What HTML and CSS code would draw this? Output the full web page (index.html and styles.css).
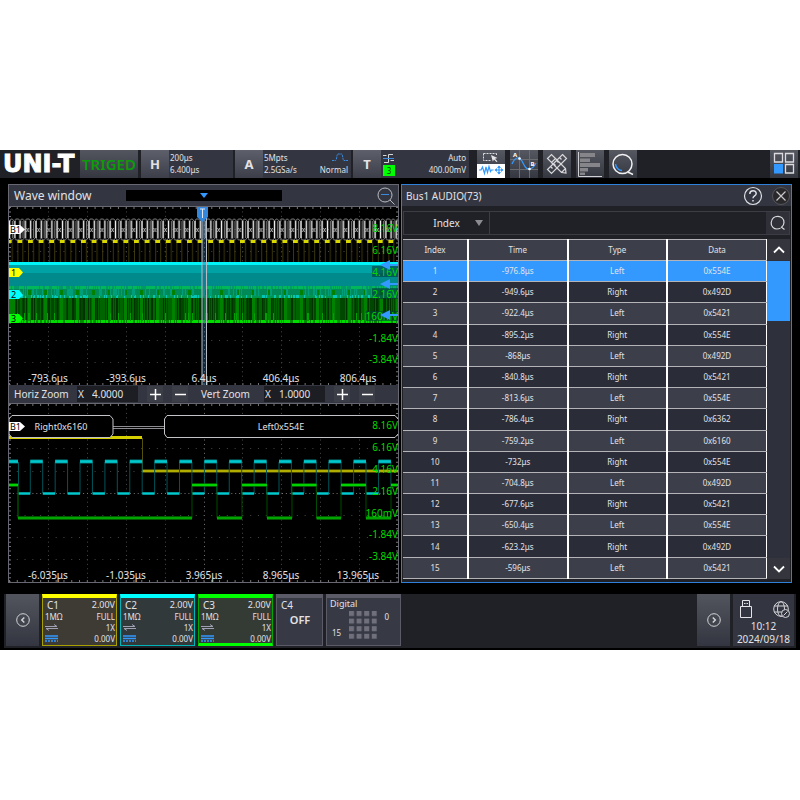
FILE: index.html
```html
<!DOCTYPE html>
<html lang="en">
<head>
    <meta charset="UTF-8">
    <meta name="viewport" content="width=device-width, initial-scale=1.0">
    <title>UNI-T Oscilloscope</title>
    <link rel="stylesheet" href="styles.css">
</head>
<body>
    <div class="screen">
        <header class="topbar">
            <div class="logo">UNI-T</div>
            <div class="trig-status">TRIGED</div>
            <div class="info info-h">
                <button class="info-key">H</button>
                <div class="info-body">
                    <div class="line"><span>200μs</span></div>
                    <div class="line"><span>6.400μs</span></div>
                </div>
            </div>
            <div class="info info-a">
                <button class="info-key">A</button>
                <div class="info-body">
                    <div class="line"><span>5Mpts</span>
                        <svg width="16" height="9" viewBox="0 0 16 9" fill="none" stroke="#3a8be0"><path d="M0 7.500H3.500C5 7.500 4.500 1 6 1H9.500C11 1 10.500 7.500 12 7.500H16" stroke-dasharray="2 .6"/></svg>
                    </div>
                    <div class="line"><span>2.5GSa/s</span><span>Normal</span></div>
                </div>
            </div>
            <div class="info info-t">
                <button class="info-key">T</button>
                <div class="info-body">
                    <div class="line">
                        <svg width="12" height="10" viewBox="0 0 12 10" fill="none" stroke="#d5d6da"><path d="M1 9.500H5.500V1.500H10M0 2.500H3.500M7.500 7.500H11"/><path d="M0 5.500H11" stroke="#3a8be0"/></svg>
                        <span>Auto</span>
                    </div>
                    <div class="line"><span class="source">3</span><span>400.00mV</span></div>
                </div>
            </div>
            <div class="tools">
                <button class="tool" aria-label="Zoom and pan">
                    <svg viewBox="0 0 28 28" fill="none"><path d="M0 14H28V28H0z" fill="#fff"/><path d="M6.500 3.500H19.500M6.500 3.500V10.500H14M19.500 3.500V5" stroke="#dcdde0" stroke-dasharray="2 1"/><path d="M14 5L20.500 8L18 8.800L20.500 11.500L19.500 12L17 9.500L15.800 11.500z" fill="#e6e6e8"/><path d="M2 20H4L5.500 17L7.500 23.500L9 17L10.500 22.500L12 16.500L13.500 21.500L14.500 20H16.500M18 20H26M22 16V24" stroke="#3399ff" stroke-width="1.200"/><path d="M22 15.500L24 18H20zM22 24.500L24 22H20zM17.500 20L20 18V22zM26.500 20L24 18V22z" fill="#3399ff"/></svg>
                </button>
                <button class="tool" aria-label="Cursor">
                    <svg viewBox="0 0 28 28" fill="none"><path d="M9.500 0V28M19.500 0V28M0 9.500H28M0 19.500H28" stroke="#6b6c70"/><path d="M2 14C5 7 9 6 12 11C15 17 16 19 19 19C22 19 24 17 26 13" stroke="#3399ff" stroke-width="1.300"/><circle cx="9.500" cy="8.500" r="1.300" fill="#fff"/><circle cx="19.500" cy="19" r="1.300" fill="#fff"/><text x="3" y="6.500" class="tool-letter">A</text><text x="20.500" y="15.500" class="tool-letter">B</text></svg>
                </button>
                <button class="tool" aria-label="Measure">
                    <svg viewBox="0 0 28 28" fill="none" stroke="#d8d8dc" stroke-width="1.200"><path d="M4.500 8.500L8.500 4.500L12.500 8.500L8.500 12.500zM8.500 12.500L18.500 22.500L23 23L22.500 18.500L12.500 8.500M18.500 22.500L22.500 18.500"/><path d="M19.500 4.500L23.500 8.500L8.500 23.500L4.500 19.500zM16.500 7.500L18.500 9.500M13.500 10.500L15.500 12.500M10.500 13.500L12.500 15.500M7.500 16.500L9.500 18.500"/></svg>
                </button>
                <button class="tool" aria-label="Histogram">
                    <svg viewBox="0 0 28 28" fill="#85858a"><path d="M4 3H19V7H4zM4 8.500H14V12H4zM4 13H24V17H4zM4 18H12V21.500H4zM4 22.500H9V25H4z"/><path d="M2.500 2V26.500H26" fill="none" stroke="#d0d0d4"/></svg>
                </button>
                <button class="tool" aria-label="Search">
                    <svg viewBox="0 0 28 28" fill="none" stroke="#f0f0f2" stroke-width="1.500"><circle cx="13.500" cy="14" r="9.500"/><path d="M18.500 22.500H20L24 24.500"/><path d="M6.500 14C7 18 10 20.500 13 20.500" stroke="#3399ff"/></svg>
                </button>
            </div>
            <button class="tool tool-menu" aria-label="Layout">
                <svg viewBox="0 0 28 28" fill="none" stroke="#dcdce0" stroke-width="1.300"><path d="M4.500 3.500H12.500V12H4.500zM15.500 3.500H23.500V12H15.500zM15.500 14.500H23.500V23H15.500z"/><path d="M4 14H13V23.500H4z" fill="#3399ff" stroke="none"/></svg>
            </button>
        </header>

        <main class="windows">
            <section class="wave-window">
                <div class="title-bar">
                    <h1>Wave window</h1>
                    <div class="position-track"><span class="position-mark"></span></div>
                    <button class="icon-button" aria-label="Zoom out">
                        <svg width="20" height="20" viewBox="0 0 20 20" fill="none" stroke="#b9bac0"><circle cx="9" cy="9" r="7"/><path d="M14 14L18.500 18.500"/><path d="M5 8.500H13" stroke="#3a8be0"/></svg>
                    </button>
                </div>
                <svg class="plot" id="mainPlot" viewBox="9 207 389 178">
                    <defs>
                        <pattern id="busCells" x="35" y="218" width="10.600" height="23" patternUnits="userSpaceOnUse">
                            <path d="M1 3V20M6.300 3V20" stroke="#f4f4f4" stroke-width="1.400" fill="none"/>
                            <path d="M9.300 3V20" stroke="#888" fill="none"/>
                            <path d="M1 3L2 1H4.800L6.300 3L7.800 1H9L10.600 3M1 20L2 22H4.800L6.300 20L7.800 22H9L10.600 20" stroke="#aaa" stroke-width=".7" fill="none"/>
                            <path d="M2.300 10L4.600 14M4.600 10L2.300 14" stroke="#ccc" stroke-width=".8"/>
                        </pattern>
                        <pattern id="clockPulses" x="28" y="240" width="10.600" height="23" patternUnits="userSpaceOnUse">
                            <path d="M0 0H5V3H0z" fill="#d8d800"/>
                            <path d="M.5 3V23M5.500 3V23" stroke="#4a4510" stroke-width=".8"/>
                        </pattern>
                    </defs>
                    <g class="grid"></g>
                    <path d="M9 218H398V241H9z" fill="url(#busCells)"/>
                    <path d="M9 240H398V263H9z" fill="url(#clockPulses)"/>
                    <path d="M9 262H398V298H9z" fill="#008a8c"/>
                    <path d="M9 265H398V273H9z" fill="#00a3a5"/>
                    <path d="M9 262H398V265H9z" fill="#00f4f8"/>
                    <path d="M9 286H398V298H9z" fill="#008a58"/>
                    <path d="M9 298H398V323H9z" fill="#003200"/>
                    <g id="dataNoise"></g>
                    <g class="cursor-zone">
                        <path d="M202 206H206V385H202z" fill="#2f6ea5" fill-opacity=".35"/>
                        <path d="M202 206V385M206.500 206V385" stroke="#b8bcc4"/>
                        <path d="M197 206H208V217L202.500 222L197 217z" fill="#3388dd"/>
                        <path d="M200 209H205M202.500 209V218" stroke="#e4e8ee"/>
                    </g>
                    <g class="scale-labels">
                        <path d="M372 266H398V277H372zM372 288H398V299H372zM366 311H398V321H366z" fill="#003c3a" fill-opacity=".6"/>
                        <text x="398" y="232">8.16V</text><text x="398" y="254">6.16V</text><text x="398" y="276">4.16V</text><text x="398" y="298">2.16V</text><text x="398" y="320">160mV</text><text x="398" y="342">-1.84V</text><text x="398" y="363">-3.84V</text>
                    </g>
                    <path d="M380 265L390 260V264H398V266H390V270zM380 284L390 279V283H398V285H390V289zM380 315L390 310V314H398V316H390V320z" fill="#3399ff"/>
                    <g class="time-labels">
                        <text x="48" y="382">-793.6μs</text><text x="126" y="382">-393.6μs</text><text x="204" y="382">6.4μs</text><text x="281" y="382">406.4μs</text><text x="358" y="382">806.4μs</text>
                    </g>
                    <g class="tags">
                        <path d="M9 225H20L25 229.500L20 234H9z" fill="#fff"/><text x="10" y="233">B1</text>
                        <path d="M8 268H19L23 272.500L19 277H8z" fill="#ffff00"/><text x="11" y="276">1</text>
                        <path d="M8 290H19L23 295L19 299H8z" fill="#00ffff"/><text x="11" y="298">2</text>
                        <path d="M8 314H19L23 318.500L19 323H8z" fill="#00ff00"/><text x="11" y="322">3</text>
                    </g>
                </svg>
                <div class="zoom-bar">
                    <label for="horizZoom">Horiz Zoom</label>
                    <div class="zoom-field"><span>X</span><input type="text" id="horizZoom" value="4.0000"></div>
                    <button class="step" aria-label="Horizontal zoom in"><svg width="11" height="11" viewBox="0 0 11 11"><path d="M0 5.500H11M5.500 0V11"/></svg></button>
                    <button class="step" aria-label="Horizontal zoom out"><svg width="11" height="11" viewBox="0 0 11 11"><path d="M0 5.500H11"/></svg></button>
                    <label for="vertZoom" class="vert-label">Vert Zoom</label>
                    <div class="zoom-field"><span>X</span><input type="text" id="vertZoom" value="1.0000"></div>
                    <button class="step" aria-label="Vertical zoom in"><svg width="11" height="11" viewBox="0 0 11 11"><path d="M0 5.500H11M5.500 0V11"/></svg></button>
                    <button class="step" aria-label="Vertical zoom out"><svg width="11" height="11" viewBox="0 0 11 11"><path d="M0 5.500H11"/></svg></button>
                </div>
                <svg class="plot" id="zoomPlot" viewBox="9 404 389 178">
                    <g class="grid"></g>
                    <g fill="none">
                        <path d="M9 437.500H142" stroke="#d6d000" stroke-width="3"/>
                        <path d="M142.500 438V471" stroke="#55500a"/>
                        <path d="M142 471H398" stroke="#8a8800" stroke-width="3"/>
                        <path d="M142 471H398" stroke="#d6d000"/>
                        <g id="zoomTraces"></g>
                    </g>
                    <g fill="#000" stroke="#c4c4c8">
                        <path d="M113 426.500H164M113 428.500H164" stroke="#8c8c90"/>
                        <path d="M12 415.500H110L113 419V434L110 437.500H12L9 434V419z"/>
                        <path d="M398 419L395 415.500H167L164.500 419V434L167 437.500H395L398 434"/>
                    </g>
                    <g class="bus-labels"><text x="61" y="430">Right0x6160</text><text x="281" y="430">Left0x554E</text></g>
                    <g class="scale-labels">
                        <text x="398" y="429">8.16V</text><text x="398" y="451">6.16V</text><text x="398" y="473">4.16V</text><text x="398" y="495">2.16V</text><text x="398" y="517">160mV</text><text x="398" y="538">-1.84V</text><text x="398" y="560">-3.84V</text>
                    </g>
                    <g class="time-labels">
                        <text x="48" y="579">-6.035μs</text><text x="126" y="579">-1.035μs</text><text x="204" y="579">3.965μs</text><text x="281" y="579">8.965μs</text><text x="358" y="579">13.965μs</text>
                    </g>
                    <g class="tags"><path d="M9 422H20L25 426.500L20 431H9z" fill="#fff"/><text x="10" y="430">B1</text></g>
                </svg>
            </section>

            <section class="bus-window">
                <div class="title-bar bus-title">
                    <h2>Bus1 AUDIO(73)</h2>
                    <button class="icon-button" aria-label="Help">
                        <svg width="20" height="20" viewBox="0 0 20 20" fill="none" stroke="#dedfe3" stroke-width="1.200"><circle cx="10" cy="10" r="8.500"/><path d="M6.800 8C6.800 3.700 13.200 3.700 13.200 7.500C13.200 10 10 9.800 10 12.200M10 14V15.500" stroke-width="1.500"/></svg>
                    </button>
                    <button class="icon-button" aria-label="Close">
                        <svg width="20" height="20" viewBox="0 0 20 20" fill="none"><circle cx="10" cy="10" r="8.500" fill="#29282a" stroke="#55555a"/><path d="M5.500 5.500L14.500 14.500M14.500 5.500L5.500 14.500" stroke="#c8c8cc" stroke-width="1.200"/></svg>
                    </button>
                </div>
                <form class="search-row">
                    <div class="select-wrap">
                        <select aria-label="Search column"><option>Index</option><option>Time</option><option>Type</option><option>Data</option></select>
                    </div>
                    <input type="text" class="search-input" aria-label="Search text">
                    <button type="button" class="search-button" aria-label="Search">
                        <svg width="16" height="16" viewBox="0 0 16 16" fill="none" stroke="#d8d8dc" stroke-width="1.200"><path d="M10.500 13.300C3 16 .8 10 1.200 7.500C2 -1 14 -.5 14 7.500C14 9.500 13 11 11.500 12.300L14.500 14.500"/></svg>
                    </button>
                </form>
                <div class="table-area">
                    <table>
                        <thead><tr><th class="index-col">Index</th><th>Time</th><th>Type</th><th>Data</th></tr></thead>
                        <tbody>
                            <tr class="selected"><td>1</td><td>-976.8μs</td><td>Left</td><td>0x554E</td></tr>
                            <tr><td>2</td><td>-949.6μs</td><td>Right</td><td>0x492D</td></tr>
                            <tr><td>3</td><td>-922.4μs</td><td>Left</td><td>0x5421</td></tr>
                            <tr><td>4</td><td>-895.2μs</td><td>Right</td><td>0x554E</td></tr>
                            <tr><td>5</td><td>-868μs</td><td>Left</td><td>0x492D</td></tr>
                            <tr><td>6</td><td>-840.8μs</td><td>Right</td><td>0x5421</td></tr>
                            <tr><td>7</td><td>-813.6μs</td><td>Left</td><td>0x554E</td></tr>
                            <tr><td>8</td><td>-786.4μs</td><td>Right</td><td>0x6362</td></tr>
                            <tr><td>9</td><td>-759.2μs</td><td>Left</td><td>0x6160</td></tr>
                            <tr><td>10</td><td>-732μs</td><td>Right</td><td>0x554E</td></tr>
                            <tr><td>11</td><td>-704.8μs</td><td>Left</td><td>0x492D</td></tr>
                            <tr><td>12</td><td>-677.6μs</td><td>Right</td><td>0x5421</td></tr>
                            <tr><td>13</td><td>-650.4μs</td><td>Left</td><td>0x554E</td></tr>
                            <tr><td>14</td><td>-623.2μs</td><td>Right</td><td>0x492D</td></tr>
                            <tr><td>15</td><td>-596μs</td><td>Left</td><td>0x5421</td></tr>
                        </tbody>
                    </table>
                    <div class="scrollbar">
                        <button aria-label="Scroll up"><svg width="12" height="8" viewBox="0 0 12 8"><path d="M1 6.500L6 1.500L11 6.500"/></svg></button>
                        <div class="scroll-track"><div class="scroll-thumb"></div></div>
                        <button aria-label="Scroll down"><svg width="12" height="8" viewBox="0 0 12 8"><path d="M1 1.500L6 6.500L11 1.500"/></svg></button>
                    </div>
                </div>
            </section>
        </main>

        <footer class="bottombar">
            <button class="page-button" aria-label="Previous"><svg width="14" height="14" viewBox="0 0 14 14"><circle cx="7" cy="7" r="6.300"/><path d="M8.300 4.500L5.800 7L8.300 9.500" stroke-width="1.500"/></svg></button>
            <div class="channel c1">
                <div class="line"><b>C1</b><span>2.00V</span></div>
                <div class="line small"><span>1MΩ</span><span>FULL</span></div>
                <div class="line small"><svg width="13" height="7" viewBox="0 0 13 7" class="swap"><path d="M0 2.500H12L9 .5M13 4.500H1L4 6.500"/></svg><span>1X</span></div>
                <div class="line small"><svg width="13" height="7" viewBox="0 0 13 7" class="dc"><path d="M0 1H13M0 3.500H13"/><path d="M0 6H13" stroke-dasharray="2 1"/></svg><span>0.00V</span></div>
            </div>
            <div class="channel c2">
                <div class="line"><b>C2</b><span>2.00V</span></div>
                <div class="line small"><span>1MΩ</span><span>FULL</span></div>
                <div class="line small"><svg width="13" height="7" viewBox="0 0 13 7" class="swap"><path d="M0 2.500H12L9 .5M13 4.500H1L4 6.500"/></svg><span>1X</span></div>
                <div class="line small"><svg width="13" height="7" viewBox="0 0 13 7" class="dc"><path d="M0 1H13M0 3.500H13"/><path d="M0 6H13" stroke-dasharray="2 1"/></svg><span>0.00V</span></div>
            </div>
            <div class="channel c3">
                <div class="line"><b>C3</b><span>2.00V</span></div>
                <div class="line small"><span>1MΩ</span><span>FULL</span></div>
                <div class="line small"><svg width="13" height="7" viewBox="0 0 13 7" class="swap"><path d="M0 2.500H12L9 .5M13 4.500H1L4 6.500"/></svg><span>1X</span></div>
                <div class="line small"><svg width="13" height="7" viewBox="0 0 13 7" class="dc"><path d="M0 1H13M0 3.500H13"/><path d="M0 6H13" stroke-dasharray="2 1"/></svg><span>0.00V</span></div>
            </div>
            <div class="channel c4">
                <div class="line"><b>C4</b></div>
                <div class="off">OFF</div>
            </div>
            <div class="channel digital">
                <div class="digital-name">Digital</div>
                <div class="digital-body">
                    <span class="last">15</span>
                    <svg width="28" height="28" viewBox="0 0 28 28"><defs><pattern id="bits" width="7.600" height="7.600" patternUnits="userSpaceOnUse"><path d="M0 0H5V5H0z" fill="#70707c"/></pattern></defs><path d="M0 0H28V28H0z" fill="url(#bits)"/></svg>
                    <span>0</span>
                </div>
            </div>
            <button class="page-button next" aria-label="Next"><svg width="14" height="14" viewBox="0 0 14 14"><circle cx="7" cy="7" r="6.300"/><path d="M5.800 4.500L8.300 7L5.800 9.500" stroke-width="1.500"/></svg></button>
            <div class="status">
                <div class="status-icons">
                    <svg width="12" height="18" viewBox="0 0 12 18" fill="none" stroke="#e4e4e8"><path d="M2.500 6V.5H9.500V6M.5 6.500H11.500V17.500H.5zM4 3.500H5.500M6.500 3.500H8"/></svg>
                    <svg width="17" height="17" viewBox="0 0 17 17" fill="none" stroke="#d4d4d8"><circle cx="8" cy="8" r="7.300"/><ellipse cx="8" cy="8" rx="3.500" ry="7.300"/><path d="M1 5H15M1 11H15"/><circle cx="12.500" cy="12.500" r="4" fill="#333640"/><path d="M10.500 14.500L14.500 10.500"/></svg>
                </div>
                <div>10:12</div>
                <div>2024/09/18</div>
            </div>
        </footer>
    </div>
    <script src="script.js"></script>
</body>
</html>
```
FILE: styles.css
```css
* {
  box-sizing: border-box;
}

body {
  margin: 0;
  min-height: 100vh;
  display: flex;
  align-items: center;
  background-color: #fff;
  font-family: "Noto Sans", sans-serif;
  color: #e2e2e6;
}

button, input, select {
  font: inherit;
  color: inherit;
  padding: 0;
  border: none;
  border-radius: 0;
}

button {
  display: flex;
  align-items: center;
  justify-content: center;
  background: none;
  cursor: pointer;
}

h1, h2 {
  margin: 0;
  font-weight: normal;
}

.screen {
  width: 100%;
  display: flex;
  flex-direction: column;
  background-color: #000;
  padding-bottom: 2px;
}

/* top bar */
.topbar {
  display: flex;
  height: 28px;
  padding-right: 2px;
  background-color: #202127;
}

.logo {
  width: 80px;
  padding-left: 3px;
  font: bold 24px/28px "DejaVu Sans", sans-serif;
  color: #fff;
  -webkit-text-stroke: 1px #fff;
}

.trig-status {
  width: 58px;
  margin-right: 3px;
  font-size: 15px;
  font-weight: 600;
  line-height: 28px;
  text-align: center;
  color: #0a9c0a;
  background: linear-gradient(#54565f, #353740);
}

.info {
  display: flex;
  margin-right: 2px;
  background-color: #333640;
}

.info-h {
  width: 92px;
}

.info-a, .info-t {
  width: 116px;
}

.info-key {
  width: 28px;
  font-size: 13px;
  font-weight: bold;
  background: linear-gradient(#5d5f6a, #3c3e49);
}

.info-body {
  flex: 1;
  display: flex;
  flex-direction: column;
  justify-content: space-evenly;
  padding: 1px 3px 1px 1px;
  font-size: 8px;
}

.line {
  display: flex;
  justify-content: space-between;
  align-items: center;
  line-height: 12px;
}

.source {
  width: 12px;
  line-height: 11px;
  text-align: center;
  color: #004400;
  background-color: #00ff00;
}

.info-t .info-body {
  padding-left: 2px;
}

.tools {
  display: flex;
  gap: 5px;
  margin-left: 6px;
}

.tool {
  width: 28px;
  background: linear-gradient(#565861, #353740);
}

.tool svg {
  width: 28px;
  height: 28px;
}

.tool-letter {
  font-size: 6px;
  font-weight: bold;
  fill: #fff;
}

.tool-menu {
  margin-left: auto;
}

/* windows */
.windows {
  display: grid;
  grid-template-columns: 1fr 1fr;
  gap: 2px;
  padding: 6px 8px 11px;
}

.wave-window, .bus-window {
  display: flex;
  flex-direction: column;
  min-width: 0;
  border: 1px solid #676872;
}

.bus-window {
  border-color: #2f80d8;
  background-color: #202127;
}

.title-bar {
  display: flex;
  align-items: center;
  height: 21px;
  padding: 0 2px 0 5px;
  background-color: #333640;
}

.title-bar h1 {
  width: 112px;
  font-size: 12px;
}

.title-bar h2 {
  flex: 1;
  font-size: 10px;
}

.position-track {
  flex: 0 1 156px;
  display: flex;
  justify-content: center;
  height: 11px;
  margin-right: auto;
  padding-top: 3px;
  background-color: #000;
}

.position-mark {
  width: 0;
  height: 0;
  border: 4px solid transparent;
  border-top: 5px solid #3399ff;
  border-bottom: none;
}

.bus-title {
  gap: 8px;
  padding: 0;
  padding-left: 4px;
}

.plot {
  display: block;
  width: 100%;
  border-top: 1px solid #676872;
  background-color: #000;
  font-size: 10px;
}

.scale-labels text {
  fill: #00d800;
  text-anchor: end;
}

.time-labels text, .bus-labels text {
  fill: #e2e2e6;
  text-anchor: middle;
}

.bus-labels {
  font-size: 9px;
}

.tags text {
  font-size: 9px;
  fill: #000;
}

.zoom-bar {
  display: flex;
  align-items: center;
  gap: 9px;
  height: 18px;
  padding-left: 5px;
  font-size: 10px;
  background-color: #333640;
}

.zoom-bar label {
  width: 54px;
  white-space: nowrap;
}

.zoom-bar .vert-label {
  margin-left: 4px;
}

.zoom-field {
  display: flex;
  align-items: center;
  width: 61px;
  height: 16px;
  padding-left: 1px;
  font-size: 10px;
  background-color: #1d1e23;
}

.zoom-field span {
  width: 14px;
}

.zoom-field input {
  flex: 1;
  min-width: 0;
  background: none;
}

.step {
  width: 16px;
  height: 16px;
  background-color: #3b3d47;
}

.step path {
  stroke: #fff;
  stroke-width: 1.5px;
}

/* bus list */
.search-row {
  display: flex;
  height: 24px;
  margin: 5px 1px 4px 1px;
  border: 1px solid #3c3d44;
  font-size: 10px;
}

.select-wrap {
  display: flex;
  align-items: center;
  width: 86px;
  padding-right: 6px;
  border-right: 1px solid #3c3d44;
}

.select-wrap::after {
  content: "";
  border: 4px solid transparent;
  border-top: 6px solid #8c8c90;
  border-bottom: none;
}

select {
  flex: 1;
  padding-left: 14px;
  appearance: none;
  text-align: center;
  background: none;
}

.search-input {
  flex: 1;
  min-width: 0;
  background: none;
}

.search-button {
  width: 23px;
  background-color: #2f3038;
}

.table-area {
  display: flex;
  flex: 1;
  padding: 0 1px 3px 1px;
}

table {
  flex: 1;
  width: 100%;
  border-collapse: collapse;
  table-layout: fixed;
  font-size: 8px;
  line-height: 12px;
  text-align: center;
}

tr {
  height: 21px;
}

th, td {
  padding: 0;
  font-weight: normal;
  border: 1px solid #b4b4b8;
  border-width: 1px 2px;
  border-left-color: #fff;
  border-right-color: #fff;
}

.index-col {
  width: 65px;
}

th:first-child, td:first-child {
  border-left: none;
}

th:last-child, td:last-child {
  border-right-width: 1px;
}

th, tr:nth-child(odd) td {
  background-color: #3c3f49;
}

tr:nth-child(even) td {
  background-color: #2a2c37;
}

.selected td, tr.selected:nth-child(odd) td {
  background-color: #3399ff;
}

.scrollbar {
  display: flex;
  flex-direction: column;
  width: 23px;
}

.scrollbar button {
  height: 21px;
  background-color: #35363d;
}

.scrollbar path {
  fill: none;
  stroke: #fff;
  stroke-width: 1.8px;
}

.scroll-track {
  flex: 1;
  background-color: #2e313b;
}

.scroll-thumb {
  height: 20%;
  margin-top: 1px;
  background-color: #3399ff;
}

/* bottom bar */
.bottombar {
  display: flex;
  gap: 3px;
  height: 54px;
  margin: 0 4px;
  padding: 0 2px 2px;
  background-color: #202127;
}

.page-button {
  width: 33px;
  background: linear-gradient(#53555e, #333640);
}

.page-button svg, .swap, .dc {
  fill: none;
  stroke: #d4d4d8;
}

.page-button.next {
  margin-left: auto;
}

.channel {
  display: flex;
  flex-direction: column;
  width: 75px;
  padding: 1px 1px 0 2px;
  border: 1px solid #5a5b66;
  border-top-width: 4px;
  font-size: 9px;
  background-color: #373a44;
}

.channel b {
  padding-left: 2px;
  font-size: 10px;
  font-weight: normal;
}

.channel .small {
  font-size: 8px;
  line-height: 11px;
}

.channel .swap {
  stroke: #a0a0b4;
}

.channel .dc {
  stroke: #3399ff;
  stroke-width: 1.5px;
}

.c1 {
  border-color: #a8a000;
  border-top-color: #ffff00;
  background-color: #3d3b34;
}

.c2 {
  border-color: #00b4b8;
  border-top-color: #00ffff;
  background-color: #32393b;
}

.c3 {
  border-color: #00a800;
  border-top-color: #00ff00;
  border-bottom: 3px solid #00ff00;
  background-color: #343b35;
}

.c4 {
  width: 47px;
}

.off {
  font-size: 11px;
  font-weight: 600;
  line-height: 18px;
  text-align: center;
}

.digital-name {
  padding-left: 1px;
  line-height: 9px;
}

.digital-body {
  display: flex;
  justify-content: space-between;
  padding: 3px 10px 0 3px;
  font-size: 8px;
  line-height: 12px;
}

.last {
  align-self: flex-end;
}

.status {
  width: 61px;
  font-size: 10px;
  line-height: 13px;
  text-align: center;
  background-color: #333640;
}

.status-icons {
  display: flex;
  justify-content: space-between;
  align-items: flex-end;
  height: 26px;
  padding: 4px 4px 2px 7px;
}
```
FILE: script.js
```js
const SVG_NS = 'http://www.w3.org/2000/svg';

function addPath(parent, d, stroke, width, dash) {
    const path = document.createElementNS(SVG_NS, 'path');
    path.setAttribute('d', d);
    path.setAttribute('stroke', stroke);
    path.setAttribute('stroke-width', width);
    path.setAttribute('fill', 'none');
    if (dash) path.setAttribute('stroke-dasharray', dash);
    parent.appendChild(path);
}

// 10 x 8 divisions
function drawGrid(id, top) {
    const grid = document.querySelector('#' + id + ' .grid');
    const dx = 38.9, dy = 22.2;
    for (let i = 1; i < 10; i++) {
        const x = Math.round(9 + i * dx) + 0.5;
        addPath(grid, `M${x} ${top}V${top + 178}`, i === 5 ? '#777' : '#484848', 1, '1 3.44');
    }
    for (let j = 1; j < 8; j++) {
        const y = Math.round(top + j * dy) + 0.5;
        addPath(grid, `M9 ${y}H398`, j === 4 ? '#777' : '#484848', 1, j === 4 ? '1 2.9' : '1 6.78');
    }
    addPath(grid, `M9 ${top + 1}H398M9 ${top + 177}H398`, '#777', 2, '1 6.78');
    addPath(grid, `M10 ${top}V${top + 178}M397 ${top}V${top + 178}`, '#777', 2, '1 3.44');
}

let seed = 7;
function random() {
    seed = (seed * 16807) % 2147483647;
    return seed / 2147483647;
}

function drawNoise() {
    const noise = document.getElementById('dataNoise');
    for (let x = 9; x < 398; x++) {
        const r = random();
        const px = x + 0.5;
        if (r > 0.3) addPath(noise, `M${px} 298V323`, r > 0.65 ? '#006400' : '#004800', 1);
        if ((x - 12) % 16 < 3) addPath(noise, `M${px} 290V323`, '#008200', 1);
        addPath(noise, `M${px} 286V289`, random() > 0.35 ? '#00b85a' : '#009a68', 1);
        addPath(noise, `M${px} 295V298`, random() > 0.7 ? '#00c8b4' : '#009650', 1);
        addPath(noise, `M${px} 320V323`, random() > 0.4 ? '#00dc00' : '#008c00', 1);
        if (random() > 0.75) addPath(noise, `M${px} 289V296`, '#009f7c', 1);
        if (random() > 0.9) addPath(noise, `M${px} 313V321`, '#00a000', 1);
    }
}

function drawZoomTraces() {
    const traces = document.getElementById('zoomTraces');
    let high = 'M9 461.500H18', low = '', edges = 'M18.500 462V493';
    for (let i = 0; i < 15; i++) {
        const x = 30.3 + i * 24.87;
        low += `M${x - 12.4} 493.500H${x}`;
        high += `M${x} 461.500H${Math.min(x + 12.4, 398)}`;
        edges += `M${x} 462V493M${x + 12.4} 462V493`;
    }
    addPath(traces, edges, '#005458', 1);
    addPath(traces, high, '#007c80', 4);
    addPath(traces, high + low, '#00c8cc', 2.4);

    const flips = [18, 192, 217, 242, 267, 292, 316.5, 341, 366, 391, 398];
    let greenHigh = 'M9 485H18', greenLow = '', greenEdges = 'M18 485V518';
    for (let i = 0; i < flips.length - 1; i++) {
        const seg = `M${flips[i]} ${i % 2 ? 485 : 518}H${flips[i + 1]}`;
        if (i % 2) greenHigh += seg; else greenLow += seg;
        greenEdges += `M${flips[i]} 485V518`;
    }
    addPath(traces, greenEdges, '#004c00', 1);
    addPath(traces, greenHigh + greenLow, '#007400', 3.5);
    addPath(traces, greenHigh, '#00d200', 2);
    addPath(traces, greenLow, '#00d200', 1.2);
}

drawGrid('mainPlot', 207);
drawGrid('zoomPlot', 404);
drawNoise();
drawZoomTraces();
```
